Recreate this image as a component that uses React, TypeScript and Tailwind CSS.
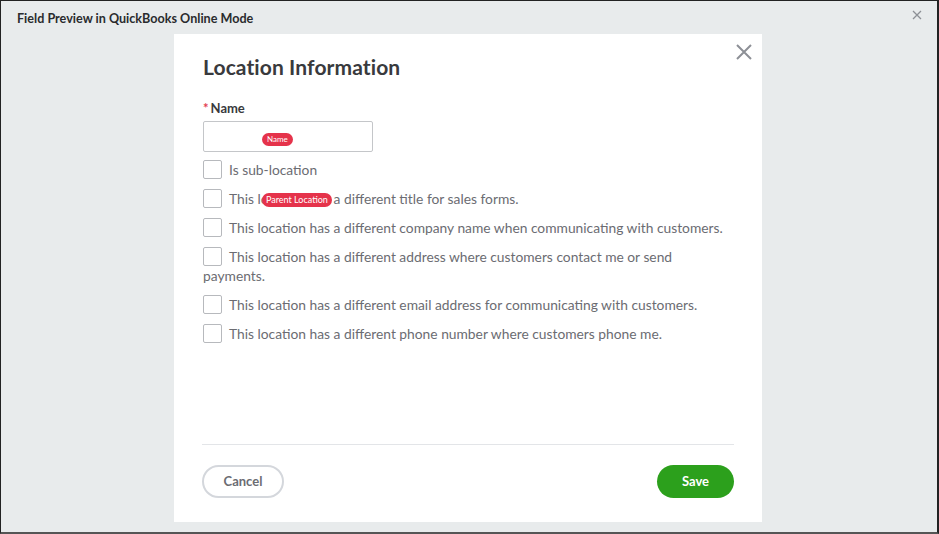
import React from "react";

const rows: string[] = [
  "Is sub-location",
  "This location has a different title for sales forms.",
  "This location has a different company name when communicating with customers.",
  "This location has a different address where customers contact me or send payments.",
  "This location has a different email address for communicating with customers.",
  "This location has a different phone number where customers phone me.",
];

export default function App() {
  return (
    <div
      className="w-[939px] h-[534px] bg-[#e8ebec] border-l-[1px] border-t-[1px] border-r-[2px] border-b-[2px] border-l-[#222] border-t-[#222] border-r-[#222] border-b-[#555] relative overflow-hidden"
      style={{ fontFamily: "Lato, 'Open Sans', sans-serif" }}
    >
      <div className="flex items-center justify-between h-[36px] pl-[16px] pr-[12px]">
        <div className="text-[12.6px] font-bold text-[#2a2b2e] mt-[1px]">Field Preview in QuickBooks Online Mode</div>
        <svg width="12" height="12" viewBox="0 0 12 12" className="mt-[-8px] mr-[2px]">
          <path d="M2 2 L10 10 M10 2 L2 10" stroke="#8d9096" strokeWidth="1.3" />
        </svg>
      </div>
      <div className="ml-[173px] mt-[-3px] w-[588px] h-[488px] bg-white relative flex flex-col">
        <button className="absolute right-[9px] top-[9px]">
          <svg width="18" height="18" viewBox="0 0 18 18">
            <path d="M2 2 L16 16 M16 2 L2 16" stroke="#8d9096" strokeWidth="2" />
          </svg>
        </button>
        <div className="px-[29px] pt-[19px] flex-1">
          <h1 className="text-[21px] font-bold text-[#393a3d] leading-[28px] tracking-[0.1px]">Location Information</h1>
          <div className="mt-[19px] text-[13px] font-bold text-[#393a3d] leading-[16px]">
            <span className="text-[#e33d4f] mr-[2px]">*</span>Name
          </div>
          <div className="mt-[5px] w-[170px] h-[31px] border border-[#c4c6c9] rounded-[2px] relative">
            <span className="absolute left-[58px] top-[11px] h-[13px] px-[5px] rounded-full bg-[#e5334b] text-white text-[8px] leading-[13px]">Name</span>
          </div>
          <div className="mt-[8px] w-[530px] flex flex-col gap-[10px] text-[13.8px] text-[#6b6c72]">
            {rows.map((r, i) => (
              <div key={i} className="relative leading-[19px]">
                <span className="float-left w-[19px] h-[19px] border border-[#b7b9bd] rounded-[2px] bg-white mr-[7px]" />
                <span>{r}</span>
                {i === 1 && (
                  <span className="absolute left-[59px] top-[4px] h-[14px] px-[4px] rounded-full bg-[#e5334b] text-white text-[9px] leading-[14px]">
                    Parent Location
                  </span>
                )}
              </div>
            ))}
          </div>
        </div>
        <div className="mx-[28px] border-t border-[#e3e5e8]" />
        <div className="flex items-center justify-between px-[28px] pt-[20px] pb-[24px]">
          <button className="w-[82px] h-[33px] rounded-full border-[2px] border-[#d4d7dc] text-[13px] font-bold text-[#6b6c72]">Cancel</button>
          <button className="w-[77px] h-[33px] rounded-full bg-[#2ca01c] text-[13px] font-bold text-white">Save</button>
        </div>
      </div>
    </div>
  );
}
